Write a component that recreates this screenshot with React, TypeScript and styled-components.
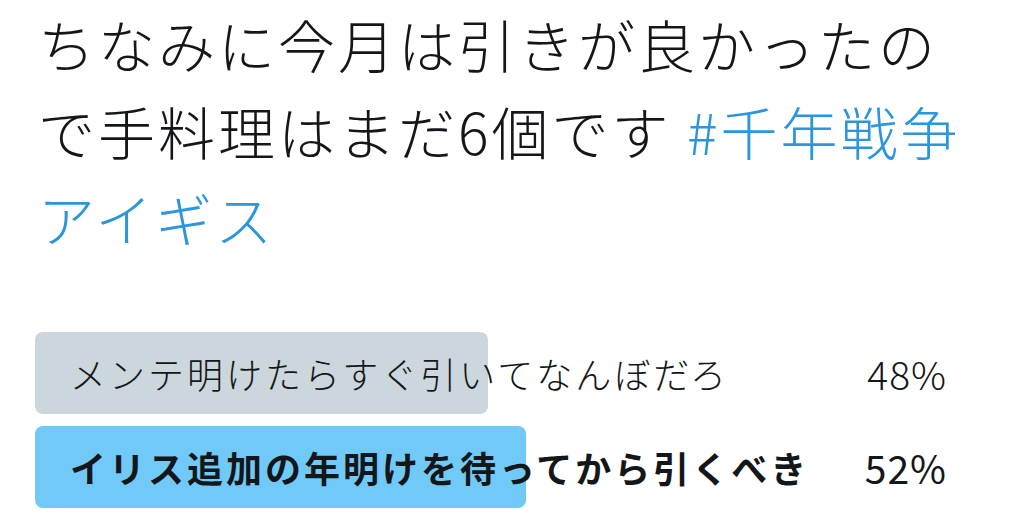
import styled, { createGlobalStyle } from "styled-components";

const GlobalStyle = createGlobalStyle`
    body {
        margin: 0;
        background: #ffffff;
        font-family: "Noto Sans CJK JP", "Noto Sans", sans-serif;
        color: #14171a;
    }
`;

const Tweet = styled.main`
    width: 1024px;
    height: 516px;
    overflow: hidden;
    background: #ffffff;
`;

const TweetText = styled.p`
    margin: 0;
    padding: 0 30px 0 38px;
    font-size: 57px;
    line-height: 87px;
    letter-spacing: 3px;
    font-weight: 300;
    color: #14171a;
`;

const Hashtag = styled.span`
    color: #2b96dc;
`;

const Poll = styled.section`
    margin: 71px 0 0 35px;
    width: 912px;
    display: flex;
    flex-direction: column;
    gap: 12px;
`;

const Choice = styled.div`
    display: grid;
    grid-template-columns: 1fr auto;
    align-items: center;
    height: 82px;
`;

const Bar = styled.div<{ $winner: boolean }>`
    grid-column: 1 / -1;
    grid-row: 1;
    align-self: stretch;
    border-radius: 8px;
    background: ${(p) => (p.$winner ? "#71c9f8" : "#ccd6dd")};
`;

const Label = styled.span<{ $winner: boolean }>`
    grid-column: 1;
    grid-row: 1;
    padding-left: 35px;
    font-size: 36px;
    letter-spacing: 3px;
    font-weight: ${(p) => (p.$winner ? 700 : 300)};
    position: relative;
`;

const Percent = styled.span<{ $winner: boolean }>`
    grid-column: 2;
    grid-row: 1;
    font-size: 39px;
    letter-spacing: 1px;
    font-weight: ${(p) => (p.$winner ? 400 : 300)};
    position: relative;
`;

const choices = [
    { label: "メンテ明けたらすぐ引いてなんぼだろ", pct: 48, winner: false },
    { label: "イリス追加の年明けを待ってから引くべき", pct: 52, winner: true },
];

export default function App() {
    return (
        <Tweet>
            <GlobalStyle />
            <TweetText>
                ちなみに今月は引きが良かったので手料理はまだ6個です <Hashtag>#千年戦争アイギス</Hashtag>
            </TweetText>

            <Poll>
                {choices.map((c) => (
                    <Choice key={c.label}>
                        <Bar $winner={c.winner} style={{ width: `${(c.pct / 100) * 944}px` }} />
                        <Label $winner={c.winner}>{c.label}</Label>
                        <Percent $winner={c.winner}>{c.pct}%</Percent>
                    </Choice>
                ))}
            </Poll>
        </Tweet>
    );
}
